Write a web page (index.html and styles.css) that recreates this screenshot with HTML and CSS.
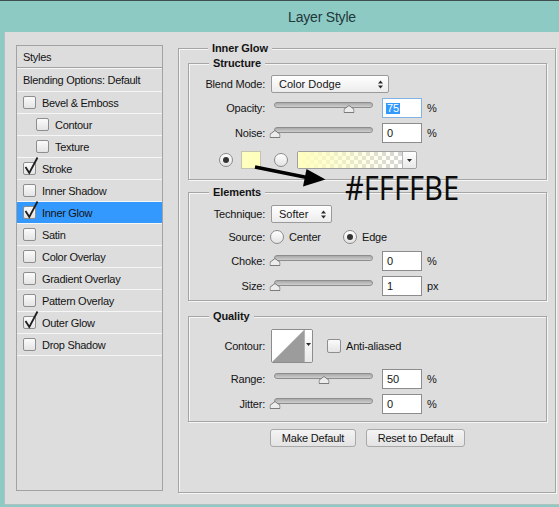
FILE: index.html
```html
<!DOCTYPE html>
<html>
<head>
<meta charset="utf-8">
<title>Layer Style</title>
<link rel="stylesheet" href="styles.css">
</head>
<body>
<div class="window">
  <div class="titlebar">Layer Style</div>
  <div class="dialog">
    <div class="styles-panel">
      <div class="sp-head">Styles</div>
      <div class="sp-blend">Blending Options: Default</div>
      <div class="sp-row"><span class="cb"></span>Bevel &amp; Emboss</div>
      <div class="sp-row sub"><span class="cb"></span>Contour</div>
      <div class="sp-row sub"><span class="cb"></span>Texture</div>
      <div class="sp-row"><span class="cb"><svg class="check" viewBox="0 0 13 13"><path d="M2.5 5 L6.3 11 L14.5 -4.5"/></svg></span>Stroke</div>
      <div class="sp-row"><span class="cb"></span>Inner Shadow</div>
      <div class="sp-row selected"><span class="cb"><svg class="check" viewBox="0 0 13 13"><path d="M2.5 5 L6.3 11 L14.5 -4.5"/></svg></span>Inner Glow</div>
      <div class="sp-row"><span class="cb"></span>Satin</div>
      <div class="sp-row"><span class="cb"></span>Color Overlay</div>
      <div class="sp-row"><span class="cb"></span>Gradient Overlay</div>
      <div class="sp-row"><span class="cb"></span>Pattern Overlay</div>
      <div class="sp-row"><span class="cb"><svg class="check" viewBox="0 0 13 13"><path d="M2.5 5 L6.3 11 L14.5 -4.5"/></svg></span>Outer Glow</div>
      <div class="sp-row"><span class="cb"></span>Drop Shadow</div>
    </div>

    <fieldset class="group outer">
      <legend>Inner Glow</legend>

      <fieldset class="group inner structure">
        <legend>Structure</legend>
        <div class="row r-select">
          <span class="lbl">Blend Mode:</span>
          <div class="select select-blend"><span>Color Dodge</span><svg class="updown" viewBox="0 0 5 9"><path d="M0 3.5 L2.5 0.5 L5 3.5Z M0 5.5 L2.5 8.5 L5 5.5Z"/></svg></div>
        </div>
        <div class="row r-slider first">
          <span class="lbl">Opacity:</span>
          <div class="slider"><div class="track"></div><div class="rail"><span class="thumb" style="left:75%"><svg viewBox="0 0 11 8"><path d="M0.5 7.5 V4.2 L5.5 0.5 L10.5 4.2 V7.5 Z"/></svg></span></div></div>
          <div class="num focus"><span class="sel">75</span></div>
          <span class="unit">%</span>
        </div>
        <div class="row r-slider">
          <span class="lbl">Noise:</span>
          <div class="slider"><div class="track"></div><div class="rail"><span class="thumb" style="left:0%"><svg viewBox="0 0 11 8"><path d="M0.5 7.5 V4.2 L5.5 0.5 L10.5 4.2 V7.5 Z"/></svg></span></div></div>
          <div class="num">0</div>
          <span class="unit">%</span>
        </div>
        <div class="row r-color">
          <span class="radio on"></span>
          <span class="swatch"></span>
          <span class="radio"></span>
          <div class="gradient"><span class="grad-fill"></span><span class="dd"><svg viewBox="0 0 5 3"><path d="M0 0 H5 L2.5 3Z"/></svg></span></div>
          <svg class="anno-arrow" viewBox="0 0 80 30" width="80" height="30"><path class="shaft" d="M5 7 L57 17.5"/><path class="head" d="M56.5 9 L75.5 19.5 L53 26.5 Z"/></svg>
          <span class="anno-text">#FFFFBE</span>
        </div>
      </fieldset>

      <fieldset class="group inner elements">
        <legend>Elements</legend>
        <div class="row r-select">
          <span class="lbl">Technique:</span>
          <div class="select select-tech"><span>Softer</span><svg class="updown" viewBox="0 0 5 9"><path d="M0 3.5 L2.5 0.5 L5 3.5Z M0 5.5 L2.5 8.5 L5 5.5Z"/></svg></div>
        </div>
        <div class="row r-source">
          <span class="lbl">Source:</span>
          <span class="opt opt-center"><span class="radio"></span>Center</span>
          <span class="opt"><span class="radio on"></span>Edge</span>
        </div>
        <div class="row r-slider">
          <span class="lbl">Choke:</span>
          <div class="slider"><div class="track"></div><div class="rail"><span class="thumb" style="left:0%"><svg viewBox="0 0 11 8"><path d="M0.5 7.5 V4.2 L5.5 0.5 L10.5 4.2 V7.5 Z"/></svg></span></div></div>
          <div class="num">0</div>
          <span class="unit">%</span>
        </div>
        <div class="row r-slider">
          <span class="lbl">Size:</span>
          <div class="slider"><div class="track"></div><div class="rail"><span class="thumb" style="left:0%"><svg viewBox="0 0 11 8"><path d="M0.5 7.5 V4.2 L5.5 0.5 L10.5 4.2 V7.5 Z"/></svg></span></div></div>
          <div class="num">1</div>
          <span class="unit">px</span>
        </div>
      </fieldset>

      <fieldset class="group inner quality">
        <legend>Quality</legend>
        <div class="row r-contour">
          <span class="lbl">Contour:</span>
          <div class="contour">
            <svg class="curve" viewBox="0 0 33 32" preserveAspectRatio="none"><rect width="33" height="32" fill="#fff"/><path d="M0 32 L33 0 V32 Z" fill="#9c9c9c"/></svg>
            <span class="dd"><svg viewBox="0 0 5 3"><path d="M0 0 H5 L2.5 3Z"/></svg></span>
          </div>
          <span class="cb cb-anti"></span>
          <span class="anti">Anti-aliased</span>
        </div>
        <div class="row r-slider first">
          <span class="lbl">Range:</span>
          <div class="slider"><div class="track"></div><div class="rail"><span class="thumb" style="left:50%"><svg viewBox="0 0 11 8"><path d="M0.5 7.5 V4.2 L5.5 0.5 L10.5 4.2 V7.5 Z"/></svg></span></div></div>
          <div class="num">50</div>
          <span class="unit">%</span>
        </div>
        <div class="row r-slider">
          <span class="lbl">Jitter:</span>
          <div class="slider"><div class="track"></div><div class="rail"><span class="thumb" style="left:0%"><svg viewBox="0 0 11 8"><path d="M0.5 7.5 V4.2 L5.5 0.5 L10.5 4.2 V7.5 Z"/></svg></span></div></div>
          <div class="num">0</div>
          <span class="unit">%</span>
        </div>
      </fieldset>

      <div class="buttons">
        <button class="btn btn-make">Make Default</button>
        <button class="btn btn-reset">Reset to Default</button>
      </div>
    </fieldset>
  </div>
</div>
</body>
</html>
```

FILE: styles.css
```css
* { box-sizing: border-box; }
html, body { margin: 0; padding: 0; }
body {
  width: 559px;
  height: 507px;
  overflow: hidden;
  background: #8ecac4;
  font-family: "Liberation Sans", Arial, sans-serif;
  font-size: 11px;
  color: #141414;
}
.window {
  height: 507px;
  border-top: 1px solid #3e4f4d;
  display: flex;
  flex-direction: column;
}
.titlebar {
  height: 31px;
  flex: none;
  display: flex;
  align-items: center;
  justify-content: center;
  padding-left: 85px;
  padding-top: 1px;
  font-size: 14px;
  letter-spacing: -0.2px;
  color: #22383a;
}
.dialog {
  margin-left: 4px;
  width: 555px;
  height: 473px;
  flex: none;
  background: #dddddd;
  border-left: 1px solid #b2c2c0;
  border-bottom: 1px solid #b2c2c0;
  display: flex;
  align-items: flex-start;
  padding: 9px 0 0 11px;
}

/* ---------- styles list ---------- */
.styles-panel {
  width: 147px;
  height: 446px;
  flex: none;
  margin-top: 4px;
  border: 1px solid #a2a2a2;
  letter-spacing: -0.3px;
}
.sp-head {
  height: 22px;
  padding-left: 6px;
  display: flex;
  align-items: center;
  border-bottom: 1px solid #a2a2a2;
}
.sp-blend {
  height: 24px;
  padding-left: 6px;
  display: flex;
  align-items: center;
  border-top: 1px solid #f6f6f6;
  border-bottom: 1px solid #f6f6f6;
}
.sp-row {
  height: 22px;
  display: flex;
  align-items: center;
  padding-left: 6px;
  border-bottom: 1px solid #f6f6f6;
}
.sp-row.sub { padding-left: 19px; }
.sp-row.selected { background: #3399ff; }
.sp-row .cb { margin-right: 6px; }

.cb {
  width: 13px;
  height: 13px;
  flex: none;
  border: 1px solid #8e8e8e;
  border-radius: 2px;
  background: linear-gradient(#fbfbfb, #e4e4e4);
  position: relative;
}
.check {
  position: absolute;
  left: -1px;
  top: -1px;
  width: 13px;
  height: 13px;
  overflow: visible;
}
.check path {
  fill: none;
  stroke: #1e1e1e;
  stroke-width: 1.8;
  stroke-linejoin: miter;
}

/* ---------- fieldsets ---------- */
fieldset.group {
  margin: 0;
  padding: 0;
  min-width: 0;
  border: 1px solid #a5a5a5;
  box-shadow: 1px 1px 0 #f6f6f6, inset 1px 1px 0 #f6f6f6;
}
fieldset.group > legend {
  margin-left: 20px;
  padding: 0 4px;
  font-weight: bold;
  line-height: 14px;
  background: #dddddd;
  letter-spacing: -0.1px;
}
.outer {
  width: 378px;
  height: 452px;
  flex: none;
  margin-left: 15px !important;
  padding: 0 8px 0 9px !important;
}
.structure { margin-top: 1px !important; padding: 5px 0 10px 0 !important; }
.elements { margin-top: 5px !important; padding: 6px 0 4px 0 !important; }
.quality { margin-top: 8px !important; padding: 6px 0 7px 0 !important; }

.row {
  display: flex;
  align-items: center;
}
.lbl {
  width: 76px;
  flex: none;
  margin-right: 6px;
  text-align: right;
  letter-spacing: -0.2px;
}
.r-select { height: 18px; }
.r-slider { height: 20px; margin-top: 5px; }
.r-slider.first { margin-top: 5px; }
.quality .r-slider.first { margin-top: 6px; }
.r-color { height: 18px; margin-top: 8px; padding-left: 30px; position: relative; }
.r-source { height: 18px; margin-top: 5px; }
.elements .r-source + .r-slider { margin-top: 5px; }

/* select */
.select {
  height: 18px;
  border: 1px solid #9a9a9a;
  border-radius: 2px;
  background: linear-gradient(#ffffff, #ececec);
  display: flex;
  align-items: center;
  justify-content: space-between;
  padding: 0 5px 0 7px;
}
.select-blend { width: 118px; }
.select-tech { width: 61px; }
.updown { width: 5px; height: 9px; }
.updown path { fill: #2a2a2a; }

/* slider */
.slider {
  position: relative;
  width: 104px;
  height: 20px;
  flex: none;
}
.track {
  margin: 4px 2px 0 3px;
  height: 6px;
  border-radius: 3px;
  border: 1px solid #8d8d8d;
  background: linear-gradient(#a9a9a9, #cfcfcf);
}
.rail {
  position: absolute;
  left: 4px;
  right: 2px;
  top: 7px;
  height: 8px;
}
.thumb {
  position: absolute;
  top: 0;
  width: 11px;
  height: 8px;
  transform: translateX(-50%);
}
.thumb svg { display: block; width: 11px; height: 8px; }
.thumb path {
  fill: #ececec;
  stroke: #7b7b7b;
  stroke-width: 1;
}

/* numeric inputs */
.num {
  width: 40px;
  height: 20px;
  flex: none;
  margin-left: 7px;
  border: 1px solid #8c8c8c;
  background: #ffffff;
  display: flex;
  align-items: center;
  padding-left: 4px;
}
.num.focus { border-color: #7fb2e5; }
.sel {
  background: #3399ff;
  color: #ffffff;
  padding: 0 1px;
  margin-left: -1px;
  line-height: 11px;
}
.unit { margin-left: 5px; }

/* radios */
.radio {
  width: 14px;
  height: 14px;
  flex: none;
  border: 1px solid #8b8b8b;
  border-radius: 50%;
  background: linear-gradient(#ffffff, #e3e3e3);
  display: flex;
  align-items: center;
  justify-content: center;
}
.radio.on::after {
  content: "";
  width: 6px;
  height: 6px;
  border-radius: 50%;
  background: #333333;
}

/* color row */
.swatch {
  width: 20px;
  height: 18px;
  flex: none;
  margin: 0 13px 0 8px;
  border: 1px solid #c4c4b0;
  background: #ffffbe;
}
.gradient {
  width: 120px;
  height: 18px;
  flex: none;
  margin-left: 9px;
  border: 1px solid #a0a0a0;
  border-radius: 2px;
  display: flex;
  overflow: hidden;
}
.grad-fill {
  flex: 1;
  background:
    linear-gradient(to right, #ffffbe 0%, rgba(255,255,190,0.55) 45%, rgba(255,255,190,0) 100%),
    repeating-conic-gradient(#d6d6d6 0% 25%, #ffffff 0% 50%) 0 0 / 8px 8px;
}
.dd {
  width: 14px;
  flex: none;
  border-left: 1px solid #b4b4b4;
  background: linear-gradient(#ffffff, #e8e8e8);
  display: flex;
  align-items: center;
  justify-content: center;
}
.dd svg { width: 5px; height: 3px; display: block; }
.dd path { fill: #2a2a2a; }

.anno-arrow {
  position: absolute;
  left: 61px;
  top: 9px;
  overflow: visible;
}
.anno-arrow .shaft { stroke: #000; stroke-width: 3.6; fill: none; }
.anno-arrow .head { fill: #000; }
.anno-text {
  position: absolute;
  left: 156px;
  top: 20px;
  font-family: "Noto Sans", "Open Sans", sans-serif;
  font-size: 33px;
  line-height: 33px;
  white-space: nowrap;
  color: #0c0c0c;
  transform: scaleX(0.88);
  transform-origin: left top;
}

/* source row */
.opt {
  display: flex;
  align-items: center;
  gap: 5px;
  letter-spacing: -0.2px;
}
.opt-center { width: 73px; margin-left: -1px; }

/* contour */
.r-contour { height: 34px; }
.contour {
  width: 42px;
  height: 34px;
  flex: none;
  border: 1px solid #8c8c8c;
  border-radius: 2px;
  display: flex;
  overflow: hidden;
  background: #fff;
}
.curve { width: 33px; height: 32px; display: block; }
.contour .dd { width: 8px; align-items: flex-start; padding-top: 13px; }
.cb-anti { width: 14px; height: 14px; margin-left: 14px; }
.anti { margin-left: 5px; letter-spacing: -0.2px; }

/* buttons */
.buttons {
  display: flex;
  gap: 10px;
  margin-top: 7px;
  padding-left: 82px;
}
.btn {
  height: 18px;
  margin: 0;
  padding: 0;
  border: 1px solid #a9a9a9;
  border-radius: 3px;
  background: linear-gradient(#f4f4f4, #e3e3e3);
  font-family: "Liberation Sans", Arial, sans-serif;
  font-size: 11px;
  letter-spacing: -0.2px;
  color: #141414;
}
.btn-make { width: 86px; }
.btn-reset { width: 99px; }
```
